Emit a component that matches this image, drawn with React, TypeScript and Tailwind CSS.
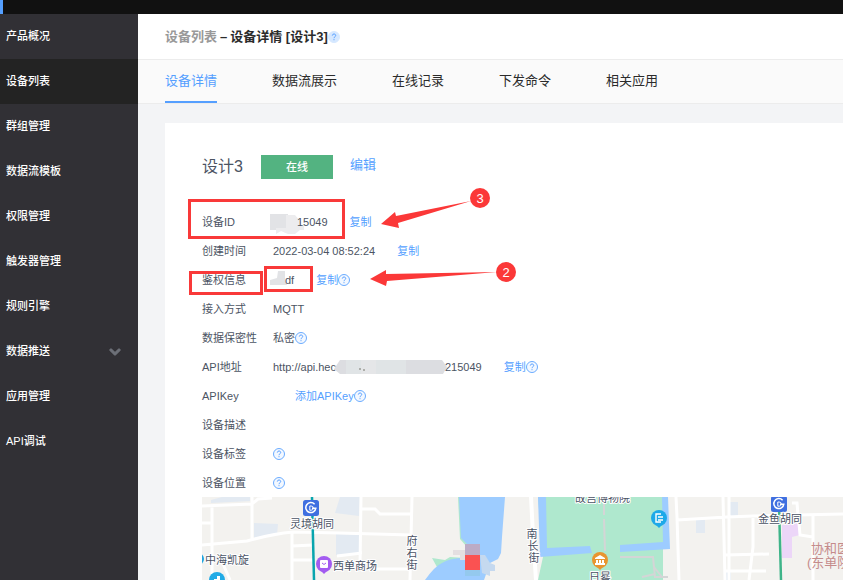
import React from "react";
import { FaChevronDown } from "react-icons/fa";

const menu = [
  { label: "产品概况" },
  { label: "设备列表", active: true },
  { label: "群组管理" },
  { label: "数据流模板" },
  { label: "权限管理" },
  { label: "触发器管理" },
  { label: "规则引擎" },
  { label: "数据推送", children: true },
  { label: "应用管理" },
  { label: "API调试" },
];

const tabs = ["设备详情", "数据流展示", "在线记录", "下发命令", "相关应用"];

const Help = ({ filled = false }: { filled?: boolean }) => (
  <button type="button" aria-label="帮助" className={filled ? "shrink-0" : "shrink-0 pb-0.5"}>
    <svg width="12" height="12" viewBox="0 0 12 12" fill="none">
      <circle cx="6" cy="6" r="5.5" fill={filled ? "#d6e8ff" : "#f3f8ff"} stroke={filled ? "#d6e8ff" : "#6aabff"} />
      <path d="M4.3 4.6C4.3 2.4 7.8 2.5 7.7 4.6C7.6 5.8 6 5.8 6 7.2M6 8.2V9.2" stroke="#559fff" />
    </svg>
  </button>
);

const Copy = () => (
  <button type="button" className="ml-[22px] text-[#559fff]">
    复制
  </button>
);

const Row = ({ label, children }: { label: string; children?: React.ReactNode }) => (
  <div className="flex h-[29px] items-center">
    <dt className="w-[71px] shrink-0">{label}</dt>
    <dd className="flex items-center whitespace-nowrap">{children}</dd>
  </div>
);

const Station = ({ x, y }: { x: number; y: number }) => (
  <g transform={`translate(${x} ${y})`}>
    <rect width="16" height="16" rx="2.5" fill="#3f6fe0" />
    <path d="M11.6 4.3A5 5 0 1 0 12.8 8.2H9" stroke="#fff" strokeWidth="1.5" fill="none" />
    <path d="M6.8 6H8.2A2.1 2.1 0 0 1 8.2 10.2H6.8Z" stroke="#fff" strokeWidth="1" fill="none" />
  </g>
);

const Pin = ({ x, y, color, children }: { x: number; y: number; color: string; children?: React.ReactNode }) => (
  <g transform={`translate(${x} ${y})`}>
    <path d="M-3 7L0 10L3 7Z" fill={color} />
    <circle r="8" fill={color} />
    {children}
  </g>
);

const DeviceMap = () => (
  <svg className="min-h-[83px] w-full flex-1 bg-[#f3f2ef]" role="img" aria-label="设备位置地图">
    {/* blocks */}
    <g fill="#e3eaf2">
      <path d="M9 3L20 0H48V4L9 6ZM52 26L76 27L75 38L52 41ZM138 0H158L157 19L133 16ZM134 37L158 38V56L134 58Z" />
      <path d="M528 5H536V19H528ZM494 23H503V36H494ZM523 75H529V83H523Z" />
    </g>
    <path d="M580 28L598 26V38L590 40V61H580Z" fill="#ecd6f8" />
    {/* palace */}
    <path d="M336 0H461V83H336L341 60Z" fill="#afe8ce" />
    <path d="M336 0H344L345 51L388 49L390 56L338 60Z" fill="#9dccff" />
    <path d="M460 0H466L468 52L418 55V48L461 45Z" fill="#9dccff" />
    {/* lake */}
    <path d="M256 0H262V42L268 50L264 62L235 70L230 61L243 63L248 60L263 61L265 50L258 42Z" fill="#afe8ce" />
    <path d="M257 0H303L300 40L299 56L296 62L288 66L282 83H223Q233 69 240 66Q248 61 263 61L266 48L259 41Z" fill="#9dccff" />
    {/* streets */}
    <g stroke="#fff" strokeWidth="3" fill="none">
      <path d="M0 9L50 7L56 2L70 1M10 9V83M50 0V43M0 26H10M0 48L45 44Q70 37 91 35L138 36L209 38" />
      <path d="M90 35V83M90 49L111 48M90 63H111M159 0L158 70M160 12H173L178 17H209M135 59L160 56M171 72H206M18 60L28 83" />
      <path d="M210 0L208 83" />
      <path d="M329 0L331 38L334 83" strokeWidth="4" />
      <path d="M474 0L475 20L477 83M475 23L525 20L551 19L641 17M521 0L523 83M527 0V83M551 21V50L547 83" />
      <path d="M523 58L567 57M523 74H564M611 18V83M597 26L598 38L611 40M590 6H595L596 18" />
    </g>
    <path d="M402 0V18M402 22L403 54M418 60H451L453 80H466M440 80L453 77M452 70L460 80" stroke="#d4d5d6" strokeWidth="2" fill="none" />
    <path d="M110 0L112 83" stroke="#08a5ae" strokeWidth="2.5" />
    <path d="M577 8L579 83" stroke="#3eb489" strokeWidth="2.5" />
    {/* marker */}
    <path d="M251 53H263V63H258V58H251Z" fill="#e4dfe1" />
    <path d="M263 47H278V58H263Z" fill="#bcabc6" />
    <path d="M278 58H283L288 66L293 68V74H288V79L280 76Z" fill="#c5d9ef" />
    <rect x="263" y="73" width="15" height="6" fill="#94c9ee" />
    <rect x="263" y="58" width="15" height="15" fill="#fa5252" />
    <Station x={101} y={3} />
    <Station x={569} y={-1} />
    <circle cx="-4" cy="62" r="6" fill="#1fa5e0" />
    <Pin x={15} y={83} color="#22abe6">
      <path d="M-3 4V-1H0V-4H3V4" fill="#fff" />
    </Pin>
    <Pin x={122} y={67} color="#a35cf0">
      <rect x="-4" y="-4" width="8" height="8" rx="1" fill="#fff" />
      <path d="M-2 -1Q0 2 2 -1" stroke="#a35cf0" fill="none" />
    </Pin>
    <Pin x={457} y={21} color="#1ea9e8">
      <path d="M2 -4H-3V4H2M-1 -1H4M-1 2H4" stroke="#fff" strokeWidth="1.4" fill="none" />
    </Pin>
    <Pin x={398} y={63} color="#e89530">
      <path d="M-5 -2L0 -5L5 -2V-1H-5ZM-4 0H-2V3H-4ZM-1 0H1V3H-1ZM2 0H4V3H2ZM-5 3H5V5H-5Z" fill="#fff" />
    </Pin>
    <g fontSize="11" fill="#4a5365" stroke="#fff" strokeWidth="2" strokeLinejoin="round" paintOrder="stroke">
      <text x="88" y="31">灵境胡同</text>
      <text x="3" y="67">中海凯旋</text>
      <text x="131" y="73">西单商场</text>
      <text x="373" y="5">故宫博物院</text>
      <text x="387" y="84">日晷</text>
      <text x="556" y="26">金鱼胡同</text>
      <text textAnchor="middle">
        <tspan x="210" y="48">府</tspan>
        <tspan x="210" y="60">右</tspan>
        <tspan x="210" y="72">街</tspan>
      </text>
      <text textAnchor="middle">
        <tspan x="330" y="41">南</tspan>
        <tspan x="331" y="53">长</tspan>
        <tspan x="332" y="65">街</tspan>
      </text>
    </g>
    <g fontSize="13" fill="#c58b8b">
      <text x="609" y="56">协和医院</text>
      <text x="605" y="70">(东单院区)</text>
    </g>
  </svg>
);

// step arrows and numbers drawn over the card
const Callouts = () => (
  <svg className="pointer-events-none absolute left-0 top-0" width="400" height="200" fill="#fb3838">
    <g fill="none" stroke="#f93939" strokeWidth="3">
      <rect x="24.5" y="77.5" width="154" height="37" />
      <rect x="25.5" y="149.5" width="71" height="21" />
      <rect x="100.5" y="144.5" width="46" height="23" />
    </g>
    <path d="M216 101L230 89L231 93L306 78L233 100L234 105Z" />
    <path d="M205 156L221 147V151L332 149L222 158L221 163Z" />
    <circle cx="315" cy="75" r="10" />
    <circle cx="341" cy="149" r="10" />
    <g fill="#fff" fontSize="13" textAnchor="middle">
      <text x="315" y="80">3</text>
      <text x="341" y="154">2</text>
    </g>
  </svg>
);

const App: React.FC = () => {
  return (
    <div className="flex min-h-screen flex-col overflow-hidden bg-[#f3f4f6] font-['Liberation_Sans','Noto_Sans_CJK_SC',sans-serif] text-[11px] text-[#4c5463]">
      <div className="h-[14px] border-l-3 border-[#559fff] bg-[#111111]" />
      <div className="flex flex-1">
        <nav className="w-[138px] shrink-0 bg-[#313035] font-medium text-white">
          {menu.map((item) => (
            <a
              key={item.label}
              href="#"
              className={`flex h-[45px] items-center justify-between pl-[6px] pr-[17px] ${item.active ? "bg-[#232323]" : ""}`}
            >
              {item.label}
              {item.children && <FaChevronDown className="size-3 stroke-[#6d7078] stroke-[50px] text-[#6d7078]" />}
            </a>
          ))}
        </nav>

        <main className="flex min-w-0 flex-1 flex-col">
          <header className="flex h-[46px] items-center border-b border-[#ececec] bg-white pl-[27px] text-[13px]">
            <h1 className="flex gap-[3px] font-bold text-[#2b2b2b]">
              <a href="#" className="text-[#999999]">设备列表</a>
              <span>–</span>
              <span>设备详情 [设计3]</span>
            </h1>
            <Help filled />
          </header>
          <div className="flex h-11 gap-[55px] border-b border-[#ececec] bg-[#fafafa] pl-[27px] text-[13px] text-[#2b2b2b]">
            {tabs.map((tab, i) => (
              <a
                key={tab}
                href="#"
                className={`flex items-center whitespace-nowrap border-b-2 ${i === 0 ? "border-[#559fff] text-[#559fff]" : "border-transparent"}`}
              >
                {tab}
              </a>
            ))}
          </div>

          <section className="relative ml-[27px] mt-[19px] flex flex-1 flex-col bg-white pl-[37px] pt-8">
            <div className="flex h-6 items-center">
              <h2 className="w-[59px] text-base">设计3</h2>
              <span className="flex h-6 w-[72px] items-center justify-center bg-[#53b381] font-medium text-white">在线</span>
              <a href="#" className="ml-[17px] self-start text-[13px] text-[#559fff]">编辑</a>
            </div>

            <dl className="-mb-px mt-[29px]">
              <Row label="设备ID">
                <svg width="24" height="20" className="overflow-visible">
                  <path d="M-3 1H15V17H-3Z" fill="#e2e3e6" />
                  <path d="M13 2H22L28 9V12H31V17H27L22 21H15L8 18L3 21V15H13Z" fill="#ececee" />
                </svg>
                15049
                <Copy />
              </Row>
              <Row label="创建时间">
                2022-03-04 08:52:24
                <Copy />
              </Row>
              <Row label="鉴权信息">
                <svg width="12" height="16" className="overflow-visible">
                  <path d="M-3 7L4 5L5 -2H12V8L14 12H-3Z" fill="#e2e3e6" />
                </svg>
                df
                <Copy />
                <Help />
              </Row>
              <Row label="接入方式">MQTT</Row>
              <Row label="数据保密性">
                私密
                <Help />
              </Row>
              <Row label="API地址">
                http://api.hec
                <svg width="109" height="15" className="overflow-visible">
                  <path d="M4 0H106L111 7L107 14H4L-2 9Z" fill="#dcdde1" />
                  <path d="M10 0H25V14H10ZM40 0H70V14H40Z" fill="#e0e4e6" />
                  <path d="M25 0H40V14H25Z" fill="#e5e6e8" />
                  <path d="M23 9H25M27 10H29" stroke="#77766c" />
                </svg>
                215049
                <Copy />
                <Help />
              </Row>
              <Row label="APIKey">
                <button type="button" className="ml-[22px] text-[#559fff]">添加APIKey</button>
                <Help />
              </Row>
              <Row label="设备描述" />
              <Row label="设备标签">
                <Help />
              </Row>
              <Row label="设备位置">
                <Help />
              </Row>
            </dl>
            <DeviceMap />
            <Callouts />
          </section>
        </main>
      </div>
    </div>
  );
};

export default App;
